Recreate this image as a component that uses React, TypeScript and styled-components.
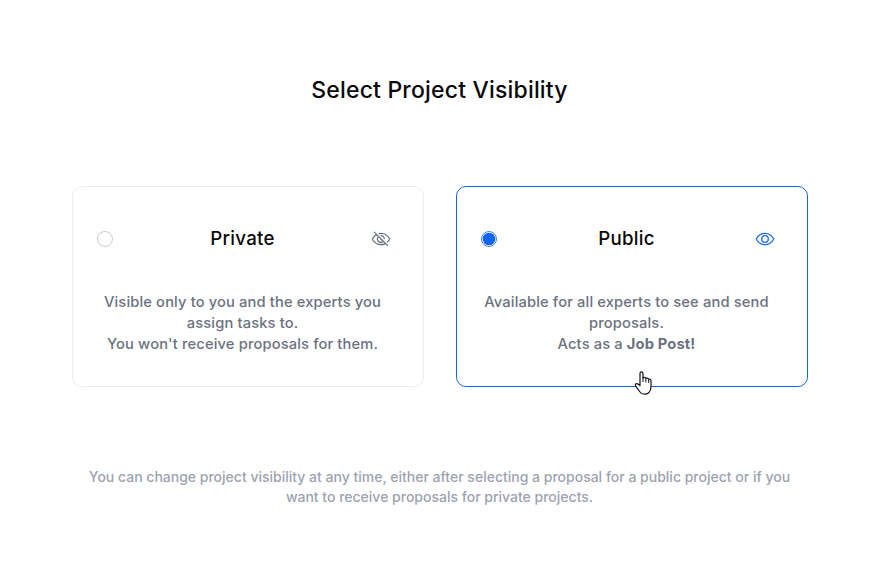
import React, { useState } from "react";
import styled, { createGlobalStyle } from "styled-components";

const GlobalStyle = createGlobalStyle`
  *, *::before, *::after { box-sizing: border-box; }
  body { margin: 0; background: #fff; font-family: Inter, sans-serif; }
`;

const Page = styled.main`
  position: relative;
  display: flex;
  flex-direction: column;
  align-items: center;
  height: 566px;
  padding-top: 74px;
  overflow: hidden;
`;

const Title = styled.h1`
  margin: 0;
  color: #09090b;
  font-size: 23px;
  line-height: 32px;
  font-weight: 500;
  letter-spacing: 0.18px;
`;

const Options = styled.div`
  display: grid;
  grid-template-columns: 352px 352px;
  gap: 32px;
  margin-top: 80px;
`;

const Card = styled.label<{ $selected: boolean }>`
  height: 201px;
  padding: 38px 24px 0;
  border: 1px solid ${(p) => (p.$selected ? "#1265ea" : "#ebebee")};
  border-radius: 10px;
`;

const CardHeader = styled.div`
  display: grid;
  grid-template-columns: 16px 1fr 20px;
  align-items: center;
  height: 28px;
  padding-right: 8px;
`;

const HiddenRadio = styled.input`
  position: absolute;
  opacity: 0;
`;

const Radio = styled.svg<{ $selected: boolean }>`
  width: 16px;
  height: 16px;
  fill: ${(p) => (p.$selected ? "#1265f3" : "#fff")};
  stroke: ${(p) => (p.$selected ? "#4285f5" : "#c9c9d3")};
`;

const CardTitle = styled.h2`
  margin: 0;
  padding-left: 2px;
  color: #09090b;
  font-size: 18.7px;
  line-height: 28px;
  font-weight: 500;
  letter-spacing: 0.25px;
  text-align: center;
`;

const Icon = styled.svg<{ $selected: boolean }>`
  width: 20px;
  height: 20px;
  fill: none;
  stroke: ${(p) => (p.$selected ? "#1668e8" : "#6b7280")};
  stroke-width: 1.25;
  stroke-linejoin: round;
`;

const Description = styled.p`
  margin: 39px 0 0;
  padding-right: 10px;
  color: #6b7280;
  font-size: 14.7px;
  line-height: 21px;
  font-weight: 480;
  letter-spacing: 0.14px;
  text-align: center;
  white-space: nowrap;
`;

const Note = styled.p`
  margin: 80px 0 0;
  color: #9ca3af;
  font-size: 14px;
  line-height: 20px;
  font-weight: 500;
  text-align: center;
`;

const Pointer = styled.svg`
  position: absolute;
  left: 634px;
  top: 370px;
  width: 18px;
  height: 26px;
`;

function RadioMark({ selected }: { selected: boolean }) {
  return (
    <Radio $selected={selected} viewBox="0 0 16 16">
      <circle cx="8" cy="8" r="7.500" fill="#fff" />
      {selected && <circle cx="8" cy="8" r="6.300" stroke="none" />}
    </Radio>
  );
}

export default function App() {
  const [value, setValue] = useState("public");
  const isPrivate = value === "private";
  const isPublic = value === "public";
  return (
    <>
      <GlobalStyle />
      <Page>
        <Title>Select Project Visibility</Title>
        <Options>
          <Card $selected={isPrivate}>
            <HiddenRadio type="radio" name="visibility" checked={isPrivate} onChange={() => setValue("private")} />
            <CardHeader>
              <RadioMark selected={isPrivate} />
              <CardTitle>Private</CardTitle>
              <Icon $selected={isPrivate} viewBox="0 0 20 20">
                <path d="M5.800 5.400C3.700 6.500 2.200 8.300 1.200 10C3 13.200 6.200 15.700 10 15.700C11.600 15.700 13.100 15.300 14.300 14.600M7.800 4.600C8.500 4.400 9.200 4.300 10 4.300C13.800 4.300 17 6.800 18.800 10C18.100 11.300 17.200 12.400 16.100 13.300M7.500 7.800A3.300 3.300 0 0 0 12.200 12.500M9.700 6.700A3.300 3.300 0 0 1 13.300 10.300M10 8.700A1.300 1.300 0 0 0 10.800 10.800M3 2.900L17 16.900" />
              </Icon>
            </CardHeader>
            <Description>
              Visible only to you and the experts you<br />assign tasks to.<br />You won't receive proposals for them.
            </Description>
          </Card>
          <Card $selected={isPublic}>
            <HiddenRadio type="radio" name="visibility" checked={isPublic} onChange={() => setValue("public")} />
            <CardHeader>
              <RadioMark selected={isPublic} />
              <CardTitle>Public</CardTitle>
              <Icon $selected={isPublic} viewBox="0 0 20 20">
                <path d="M1.200 10C3 6.800 6.200 4.300 10 4.300S17 6.800 18.800 10C17 13.200 13.800 15.700 10 15.700S3 13.200 1.200 10Z" />
                <circle cx="10" cy="10" r="3.300" />
              </Icon>
            </CardHeader>
            <Description>
              Available for all experts to see and send<br />proposals.<br />Acts as a <strong>Job Post!</strong>
            </Description>
          </Card>
        </Options>
        <Note>
          You can change project visibility at any time, either after selecting a proposal for a public project or if you<br />
          want to receive proposals for private projects.
        </Note>
        <Pointer viewBox="0 0 18 26">
          <path fill="#fff" stroke="#11111c" strokeWidth="1.200" strokeLinejoin="round" d="M6 15.500V3.500Q6 1.900 7.500 1.900T9 3.500V8Q10.500 6.800 11.900 8.300Q13.500 7.500 14.700 9.200Q16.800 8.800 17 11V16.500Q17 20 15 22.500Q13 24.300 10.500 24.200Q7.500 24.200 6 22L1.600 15.800Q.8 14.200 2.400 13.600Q3.600 13.300 6 15.500Z" />
          <path fill="none" stroke="#11111c" d="M9 7V12M11.900 8.300V12.500M14.700 9.200V13" />
        </Pointer>
      </Page>
    </>
  );
}
